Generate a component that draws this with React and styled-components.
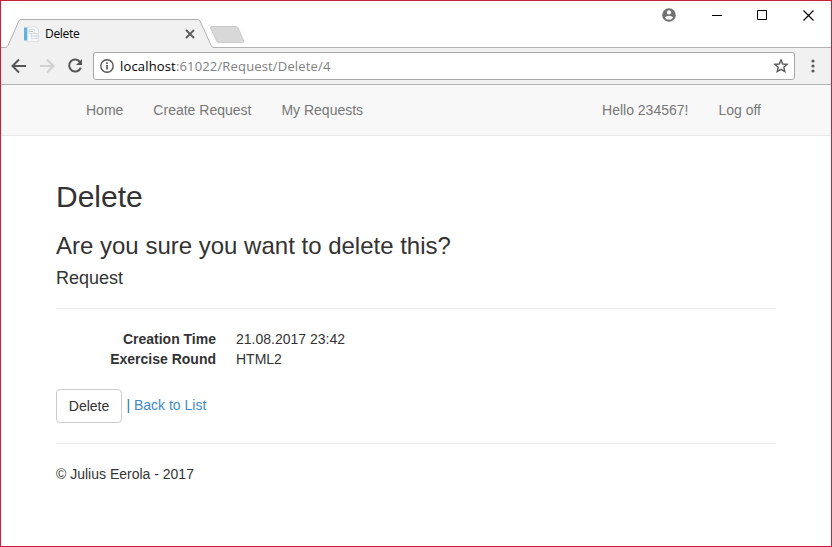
import React from 'react';
import styled, { createGlobalStyle } from 'styled-components';

const GlobalStyle = createGlobalStyle`
  * { box-sizing: border-box; }
  body { margin: 0; background: #fff; overflow: hidden; }
`;

const Window = styled.div`
  width: 832px;
  height: 547px;
  display: flex;
  flex-direction: column;
  border: 1px solid #c8203c;
  background: #fff;
  color: #333;
  font: 14px/20px "Liberation Sans", Arial, sans-serif;
`;

const TitleBar = styled.header`
  position: relative;
  flex: none;
  height: 47px;
  display: flex;
  justify-content: space-between;
  border-bottom: 1px solid #b4b3b4;
`;

const TabShape = styled.svg`
  position: absolute;
  left: 0;
  top: 0;
`;

const Tab = styled.div`
  position: relative;
  display: flex;
  align-items: center;
  width: 199px;
  height: 27px;
  margin-top: 19px;
  padding: 0 5px 0 22px;
`;

const TabTitle = styled.span`
  flex: 1;
  margin-left: 6px;
  color: #111;
  font: 12px/16px "Noto Sans", "Open Sans", sans-serif;
  letter-spacing: -0.35px;
`;

const WindowControls = styled.div`
  display: flex;
  height: 28px;
  align-items: center;
  padding-right: 17px;
`;

const Control = styled.svg`
  flex: none;
  margin-left: ${(p) => p.$gap || 0}px;
`;

const Toolbar = styled.div`
  flex: none;
  height: 37px;
  display: flex;
  align-items: center;
  padding-left: 8px;
  background: #f1f1f1;
  border-bottom: 1px solid #b4b3b4;
`;

const ToolIcon = styled.svg`
  flex: none;
  margin-left: ${(p) => p.$gap || 0}px;
`;

const AddressBar = styled.div`
  width: 702px;
  height: 28px;
  margin-left: 10px;
  padding: 0 5px;
  display: flex;
  align-items: center;
  border: 1px solid #a9a8a9;
  border-radius: 3px;
  background: #fff;
`;

const Url = styled.span`
  flex: 1;
  margin-left: 6px;
  color: #808080;
  font: 13px/20px "Open Sans", "Noto Sans", sans-serif;
  letter-spacing: 0.16px;
`;

const Host = styled.span`
  color: #000;
`;

const Navbar = styled.nav`
  flex: none;
  height: 51px;
  display: flex;
  justify-content: space-between;
  align-items: center;
  padding: 0 55px 0 70px;
  background: #f8f8f8;
  border-bottom: 1px solid #e7e7e7;
`;

const NavGroup = styled.div`
  display: flex;
`;

const NavLink = styled.a`
  padding: 15px;
  color: #777;
`;

const Content = styled.main`
  padding: 44px 55px 0;
`;

const Heading = styled.h2`
  margin: 0 0 20px;
  font-size: 30px;
  font-weight: 400;
  line-height: 33px;
`;

const Question = styled.h3`
  margin: 0 0 9px;
  font-size: 24px;
  font-weight: 400;
  line-height: 26px;
`;

const Entity = styled.h4`
  margin: 0;
  font-size: 18px;
  font-weight: 400;
  line-height: 20px;
`;

const Divider = styled.hr`
  height: 1px;
  margin: 20px 0;
  border: 0;
  background: #eee;
`;

const Details = styled.dl`
  display: grid;
  grid-template-columns: 160px 1fr;
  column-gap: 20px;
  margin: 0 0 20px;
`;

const Term = styled.dt`
  font-weight: 700;
  text-align: right;
`;

const Value = styled.dd`
  margin: 0;
`;

const Actions = styled.div`
  display: flex;
  height: 34px;
`;

const Button = styled.button`
  width: 66px;
  height: 34px;
  padding: 0;
  border: 1px solid #ccc;
  border-radius: 4px;
  background: #fff;
  color: #333;
  font: inherit;
`;

const ActionText = styled.span`
  margin: 6px 0 0 4.4px;
  color: #428bca;
`;

const Separator = styled.span`
  color: #2f6fa6;
`;

function BrowserTitle() {
  return (
    <TitleBar>
      <TabShape width="250" height="47" viewBox="1 1 250 47">
        <path d="M1 48V47.5H5.5Q7.2 47.3 8 45.5L18.8 21Q19.6 19.5 21 19.5H197.5Q199.2 19.5 200 21L211.2 45.5Q212 47.5 214 47.5V48Z" fill="#f1f1f1" />
        <path d="M1 47.5H5.5Q7.2 47.3 8 45.5L18.8 21Q19.6 19.5 21 19.5H197.5Q199.2 19.5 200 21L211.2 45.5Q212 47.5 214 47.5" fill="none" stroke="#b0afb0" />
        <path d="M212 26.5H236Q237.5 26.5 238.2 28L243.7 41Q244.3 42.5 242.5 42.5H219Q217.5 42.5 216.8 41L210.5 28Q210 26.5 212 26.5Z" fill="#d8d8d8" stroke="#cbcbcb" />
      </TabShape>
      <Tab>
        <svg width="16" height="16" viewBox="0 0 16 16">
          <path d="M4.5 .8h8l3 3v11.7h-11z" fill="#f6f8f9" stroke="#d5dade" strokeWidth=".8" />
          <path d="M1 1.5h3v13H1z" fill="#62b0db" />
          <path d="M4 1.5h1v13H4z" fill="#c3dfed" />
          <path d="M6 3.5h5v4H6zM8.5 7.5h5.5v5H8.5z" fill="#fff" stroke="#c9d1da" strokeWidth=".8" />
          <path d="M6 5.5h4M9 10h4.5" stroke="#b6c7d6" />
        </svg>
        <TabTitle>Delete</TabTitle>
        <svg width="10" height="10" viewBox="0 0 10 10">
          <path d="M1 1l8 8M9 1l-8 8" stroke="#5b5b5b" strokeWidth="1.8" />
        </svg>
      </Tab>
      <WindowControls>
        <Control width="14" height="14" viewBox="0 0 14 14">
          <circle cx="7" cy="7" r="6.8" fill="#727172" />
          <circle cx="7" cy="4.4" r="2.1" fill="#fff" />
          <path d="M2.8 9.3Q7 6 11.2 9.3Q9.8 11.8 7 11.8T2.8 9.3" fill="#fff" />
        </Control>
        <Control $gap={36} width="10" height="11" viewBox="0 0 10 11">
          <path d="M0 5.5h10" stroke="#000" />
        </Control>
        <Control $gap={35} width="10" height="10" viewBox="0 0 10 10">
          <path d="M.5 .5h9v9h-9z" fill="none" stroke="#000" />
        </Control>
        <Control $gap={36} width="11" height="11" viewBox="0 0 11 11">
          <path d="M.5 .5l10 10M10.5 .5l-10 10" stroke="#000" strokeWidth="1.15" />
        </Control>
      </WindowControls>
    </TitleBar>
  );
}

function BrowserToolbar() {
  return (
    <Toolbar>
      <ToolIcon $gap={2} width="16" height="16" viewBox="0 0 16 16">
        <path d="M15 8H2M8 1.5L1.5 8L8 14.5" fill="none" stroke="#565656" strokeWidth="2" />
      </ToolIcon>
      <ToolIcon $gap={12} width="16" height="16" viewBox="0 0 16 16">
        <path d="M1 8h13M8 1.5L14.5 8L8 14.5" fill="none" stroke="#d0d0d0" strokeWidth="2" />
      </ToolIcon>
      <ToolIcon $gap={12} width="16" height="16" viewBox="0 0 16 16">
        <path d="M13.2 4.2A6 6 0 1 0 13.8 9.6" fill="none" stroke="#565656" strokeWidth="2" />
        <path d="M15 1v6H9z" fill="#565656" />
      </ToolIcon>
      <AddressBar>
        <ToolIcon $gap={1} width="14" height="14" viewBox="0 0 14 14">
          <circle cx="7" cy="7" r="6.2" fill="none" stroke="#555" strokeWidth="1.4" />
          <path d="M7 6v4.5M7 3.3v1.6" stroke="#555" strokeWidth="1.6" />
        </ToolIcon>
        <Url><Host>localhost</Host>:61022/Request/Delete/4</Url>
        <svg width="16" height="16" viewBox="0 0 16 16">
          <path d="M8 2l1.7 4 4.4.4-3.3 2.9 1 4.3L8 11.3l-3.8 2.3 1-4.3-3.3-2.9 4.4-.4z" fill="none" stroke="#5a5a5a" strokeWidth="1.4" />
        </svg>
      </AddressBar>
      <ToolIcon $gap={16} width="4" height="14" viewBox="0 0 4 14">
        <g fill="#5a5a5a">
          <circle cx="2" cy="2" r="1.6" />
          <circle cx="2" cy="7" r="1.6" />
          <circle cx="2" cy="12" r="1.6" />
        </g>
      </ToolIcon>
    </Toolbar>
  );
}

export default function App() {
  return (
    <>
      <GlobalStyle />
      <Window>
        <BrowserTitle />
        <BrowserToolbar />
        <Navbar>
          <NavGroup>
            <NavLink>Home</NavLink>
            <NavLink>Create Request</NavLink>
            <NavLink>My Requests</NavLink>
          </NavGroup>
          <NavGroup>
            <NavLink>Hello 234567!</NavLink>
            <NavLink>Log off</NavLink>
          </NavGroup>
        </Navbar>
        <Content>
          <Heading>Delete</Heading>
          <Question>Are you sure you want to delete this?</Question>
          <Entity>Request</Entity>
          <Divider />
          <Details>
            <Term>Creation Time</Term>
            <Value>21.08.2017 23:42</Value>
            <Term>Exercise Round</Term>
            <Value>HTML2</Value>
          </Details>
          <Actions>
            <Button>Delete</Button>
            <ActionText><Separator>|</Separator> <a>Back to List</a></ActionText>
          </Actions>
          <Divider />
          <footer>© Julius Eerola - 2017</footer>
        </Content>
      </Window>
    </>
  );
}
